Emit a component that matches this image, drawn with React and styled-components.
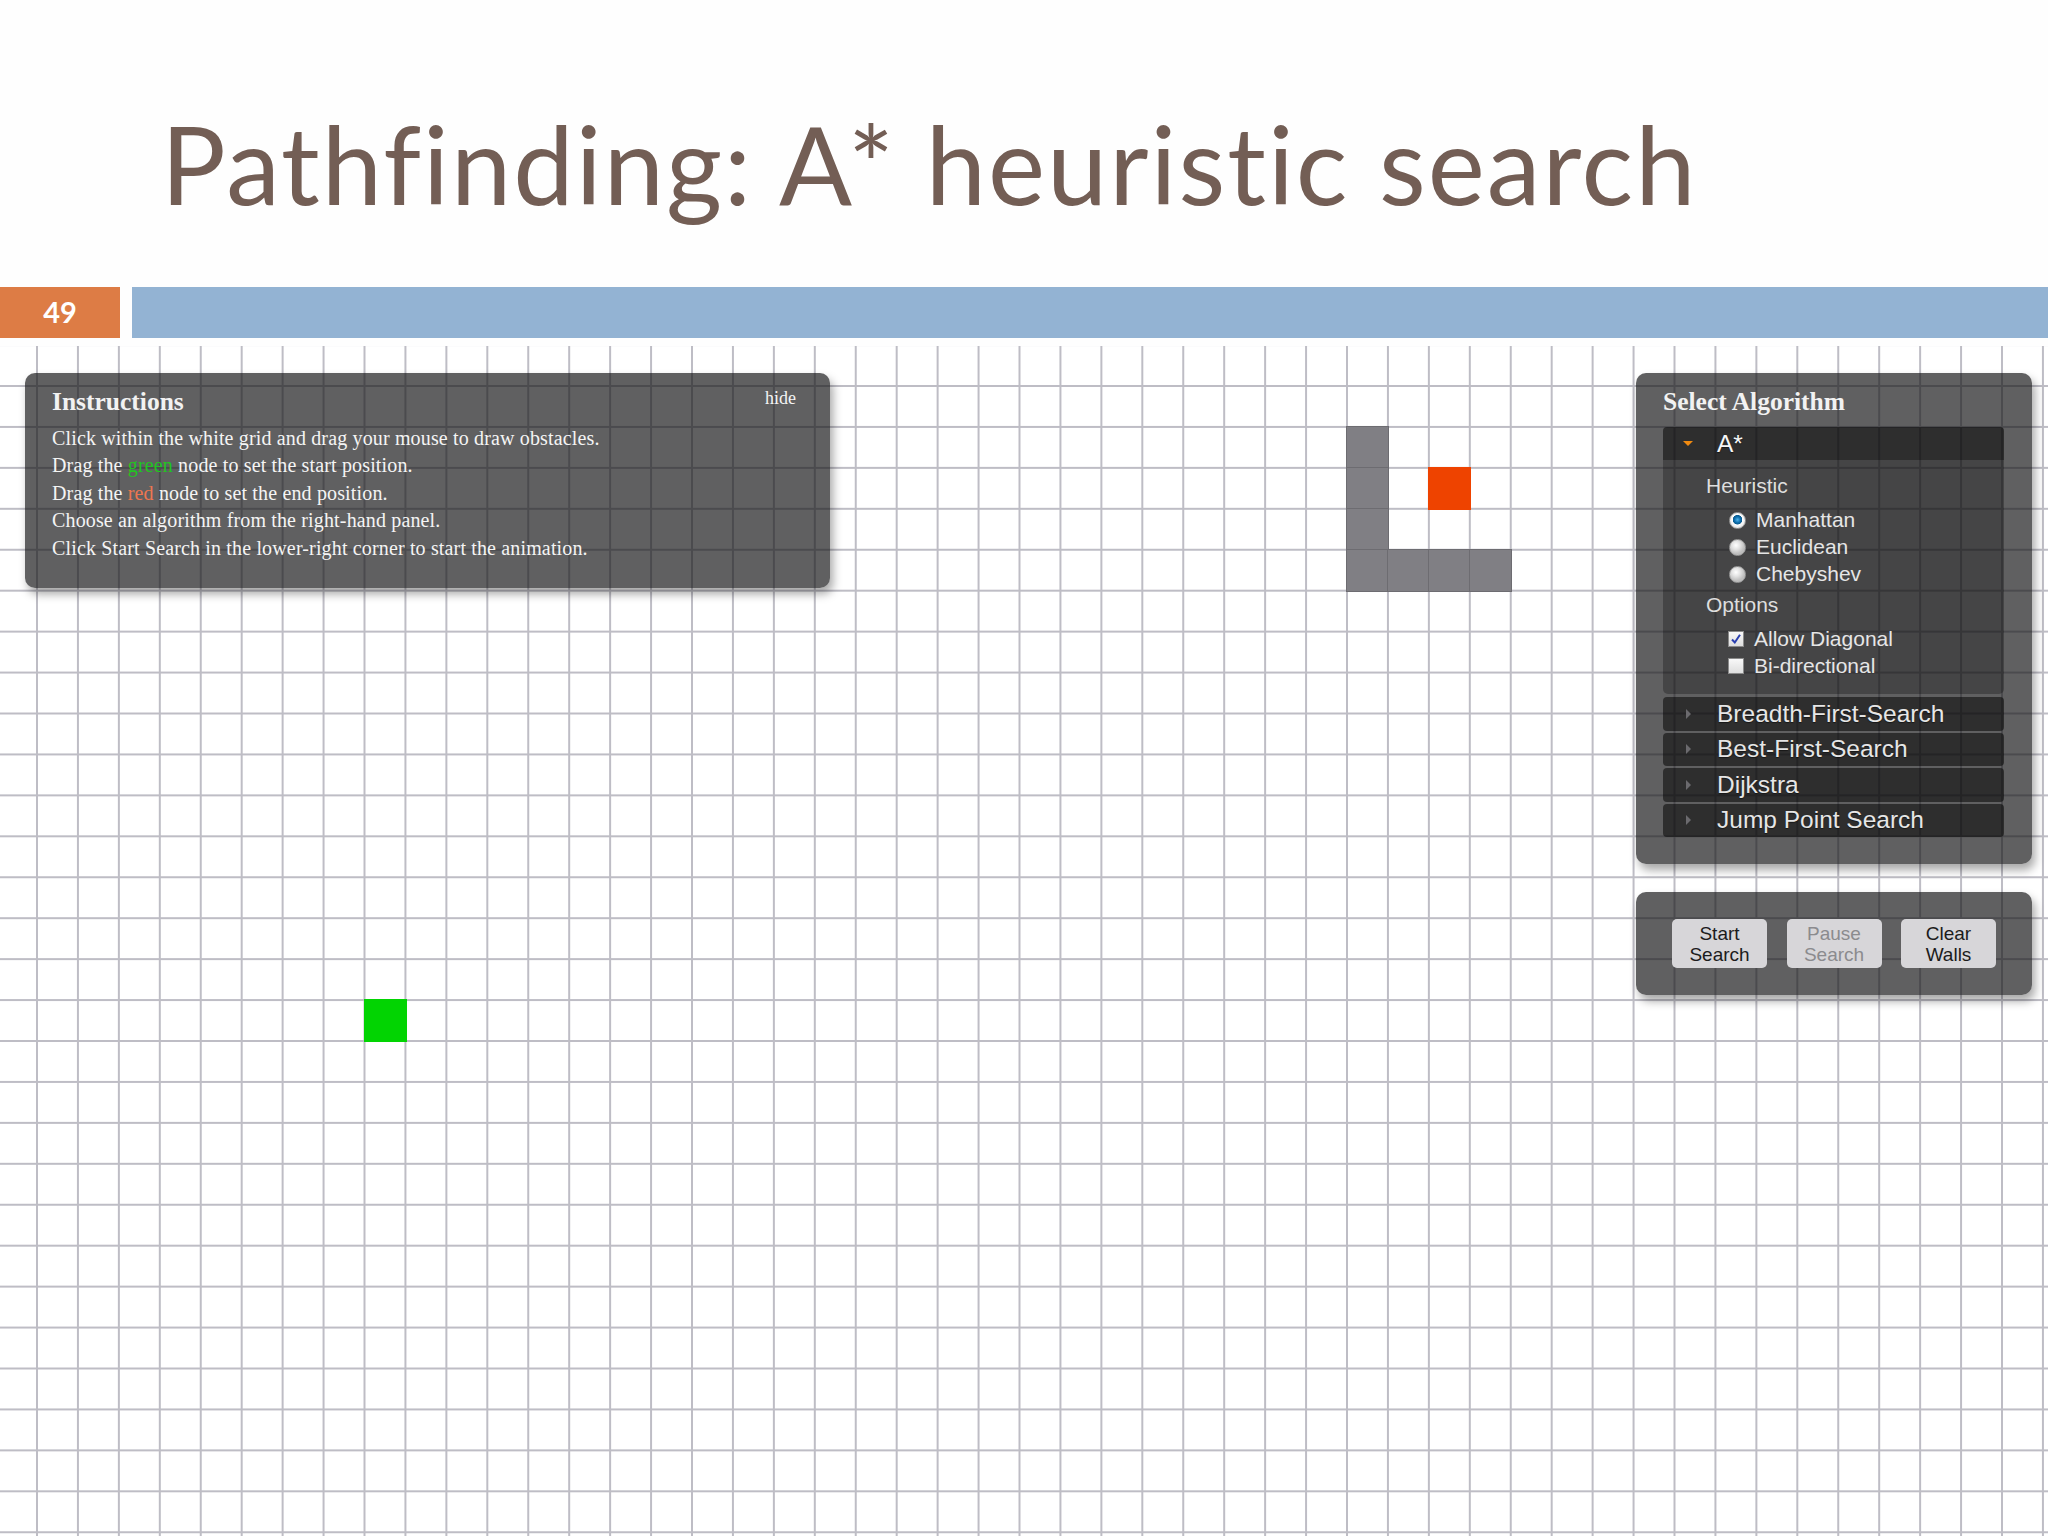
import React from "react";
import styled, { createGlobalStyle } from "styled-components";

const Global = createGlobalStyle`
  html, body { margin: 0; padding: 0; background: #ffffff; }
  body { width: 2048px; height: 1536px; overflow: hidden; }
  * { box-sizing: border-box; }
`;

const STEP = 40.95;
const GX = 37;
const GY = 40;

const Slide = styled.div`
  width: 2048px;
  height: 1536px;
  display: flex;
  flex-direction: column;
  background: #fefefe;
`;

const TitleArea = styled.header`
  height: 287px;
  padding: 109px 0 0 161px;
`;

const Title = styled.h1`
  margin: 0;
  font-family: Lato, "Open Sans", sans-serif;
  font-weight: 400;
  font-size: 108px;
  line-height: 108px;
  color: #735e55;
  letter-spacing: 2px;
  white-space: nowrap;
`;

const BarRow = styled.div`
  height: 51px;
  display: flex;
  gap: 12px;
`;

const NumberBadge = styled.div`
  width: 120px;
  background: #dd7c45;
  color: #ffffff;
  font-family: Lato, sans-serif;
  font-weight: 700;
  font-size: 29px;
  display: flex;
  align-items: center;
  justify-content: center;
  padding-bottom: 2px;
`;

const AccentBar = styled.div`
  flex: 1;
  background: #93b3d3;
`;

const Canvas = styled.main`
  margin-top: 8px;
  flex: 1;
  position: relative;
  background-color: #ffffff;
  background-image: linear-gradient(to right, #bebdc5 2px, transparent 2px),
    linear-gradient(to bottom, #bebdc5 2px, transparent 2px);
  background-size: ${STEP}px ${STEP}px;
  background-position: ${GX - 1}px ${GY - 1}px;
`;

const Cell = styled.div`
  position: absolute;
  width: ${STEP + 2}px;
  height: ${STEP + 2}px;
  background: ${(p) => p.$color};
  box-shadow: ${(p) => (p.$wall ? "inset 0 0 0 1px #6d6c71" : "none")};
`;

const Panel = styled.section`
  position: absolute;
  background: rgba(20, 20, 22, 0.68);
  border-radius: 10px;
  box-shadow: 3px 6px 10px rgba(0, 0, 0, 0.35);
`;

const InstructionsPanel = styled(Panel)`
  left: 25px;
  top: 27px;
  width: 805px;
  height: 215px;
  padding: 14px 34px 0 27px;
  font-family: "Liberation Serif", "Times New Roman", serif;
  color: #f4f4f4;
`;

const PanelHead = styled.div`
  display: flex;
  justify-content: space-between;
  align-items: flex-start;
`;

const PanelTitle = styled.h2`
  margin: 0;
  font-family: "Liberation Serif", "Times New Roman", serif;
  font-weight: 700;
  font-size: 25.5px;
  line-height: 30px;
  color: #f2f2f2;
`;

const HideLink = styled.span`
  margin-top: 1px;
  font-size: 18px;
  line-height: 20px;
  color: #f4f4f4;
`;

const InstructionList = styled.div`
  margin-top: 7.5px;
  font-size: 20px;
  line-height: 27.5px;
  letter-spacing: 0.15px;
`;

const Line = styled.div`
  white-space: nowrap;
`;

const Tint = styled.span`
  color: ${(p) => p.$color};
`;

const AlgoPanel = styled(Panel)`
  left: 1636px;
  top: 27px;
  width: 396px;
  padding: 14px 28px 27px 27px;
`;

const Accordion = styled.div`
  margin-top: 10px;
  display: flex;
  flex-direction: column;
  gap: 2px;
`;

const Section = styled.div`
  display: flex;
  flex-direction: column;
`;

const SectionHeader = styled.div`
  height: ${(p) => (p.$open ? "33px" : "33.5px")};
  display: flex;
  align-items: center;
  background: rgba(0, 0, 0, 0.52);
  border-radius: ${(p) => (p.$open ? "4px 4px 0 0" : "4px")};
  font-family: "Liberation Sans", Arial, sans-serif;
  font-size: 24.5px;
  color: ${(p) => (p.$open ? "#f6f6f6" : "#e6e6e6")};
  text-shadow: 0 1px 1px rgba(0, 0, 0, 0.5);
`;

const ArrowSlot = styled.span`
  width: 54px;
  padding-left: ${(p) => (p.$open ? "20px" : "23px")};
  display: flex;
  align-items: center;
`;

const Arrow = styled.span`
  width: 0;
  height: 0;
  border-style: solid;
  ${(p) =>
    p.$open
      ? "border-width: 5px 5px 0 5px; border-color: #f08a10 transparent transparent transparent;"
      : "border-width: 5px 0 5px 5px; border-color: transparent transparent transparent #6b6a6e;"}
`;

const SectionBody = styled.div`
  background: rgba(0, 0, 0, 0.28);
  border-radius: 0 0 5px 5px;
  padding: 12px 0 15px 43px;
  font-family: "Liberation Sans", Arial, sans-serif;
  margin-bottom: 1px;
`;

const GroupLabel = styled.div`
  font-size: 21px;
  line-height: 27px;
  color: #dedede;
  margin-top: ${(p) => p.$mt || 0}px;
`;

const OptionGroup = styled.div`
  margin-top: 7px;
  padding-left: ${(p) => p.$indent}px;
`;

const OptionRow = styled.div`
  height: 27px;
  display: flex;
  align-items: center;
  gap: ${(p) => p.$gap}px;
  font-size: 21px;
  color: #e6e6e6;
  white-space: nowrap;
`;

const Radio = styled.span`
  width: 17px;
  height: 17px;
  border-radius: 50%;
  flex: none;
  margin-top: 1px;
  border: 1px solid #9a9a9a;
  background: ${(p) =>
    p.$checked
      ? "radial-gradient(circle at 50% 45%, #4fb3ea 0, #0d6fae 3px, #0a5a8e 4.5px, #ffffff 5px, #e6e6e6 8px)"
      : "radial-gradient(circle at 40% 35%, #ffffff 0, #e4e4e4 4px, #bdbdbd 8.5px)"};
`;

const Check = styled.span`
  width: 16px;
  height: 16px;
  flex: none;
  margin-top: 1px;
  border: 1px solid #8b8b8b;
  background: linear-gradient(#f8f8f8, #dedede);
  display: flex;
  align-items: center;
  justify-content: center;
`;

const ButtonPanel = styled(Panel)`
  left: 1636px;
  top: 546px;
  width: 396px;
  height: 103px;
  display: flex;
  align-items: center;
  justify-content: center;
  gap: 19.5px;
`;

const ActionButton = styled.button`
  width: 95px;
  height: 49px;
  padding: 3.5px 0;
  border: none;
  border-radius: 5px;
  background: #d7d6d9;
  font-family: "Liberation Sans", Arial, sans-serif;
  font-size: 19px;
  line-height: 21px;
  color: ${(p) => (p.disabled ? "#8b8b8e" : "#1c1c1c")};
  text-align: center;
`;

const walls = [
  [32, 1],
  [32, 2],
  [32, 3],
  [32, 4],
  [33, 4],
  [34, 4],
  [35, 4],
];

const pos = (c, r) => ({ left: GX - 1 + STEP * c, top: GY - 1 + STEP * r });

const algorithms = ["Breadth-First-Search", "Best-First-Search", "Dijkstra", "Jump Point Search"];

export default function App() {
  return (
    <>
      <Global />
      <Slide>
        <TitleArea>
          <Title>Pathfinding: A* heuristic search</Title>
        </TitleArea>
        <BarRow>
          <NumberBadge>49</NumberBadge>
          <AccentBar />
        </BarRow>
        <Canvas>
          {walls.map(([c, r]) => (
            <Cell key={`${c}-${r}`} $wall $color="#807f84" style={pos(c, r)} />
          ))}
          <Cell $color="#ee4300" style={pos(34, 2)} />
          <Cell $color="#02d402" style={pos(8, 15)} />

          <InstructionsPanel>
            <PanelHead>
              <PanelTitle>Instructions</PanelTitle>
              <HideLink>hide</HideLink>
            </PanelHead>
            <InstructionList>
              <Line>Click within the white grid and drag your mouse to draw obstacles.</Line>
              <Line>
                Drag the <Tint $color="#22c322">green</Tint> node to set the start position.
              </Line>
              <Line>
                Drag the <Tint $color="#ee7650">red</Tint> node to set the end position.
              </Line>
              <Line>Choose an algorithm from the right-hand panel.</Line>
              <Line>Click Start Search in the lower-right corner to start the animation.</Line>
            </InstructionList>
          </InstructionsPanel>

          <AlgoPanel>
            <PanelTitle>Select Algorithm</PanelTitle>
            <Accordion>
              <Section>
                <SectionHeader $open>
                  <ArrowSlot $open>
                    <Arrow $open />
                  </ArrowSlot>
                  A*
                </SectionHeader>
                <SectionBody>
                  <GroupLabel>Heuristic</GroupLabel>
                  <OptionGroup $indent={23}>
                    <OptionRow $gap={10}>
                      <Radio $checked />
                      Manhattan
                    </OptionRow>
                    <OptionRow $gap={10}>
                      <Radio />
                      Euclidean
                    </OptionRow>
                    <OptionRow $gap={10}>
                      <Radio />
                      Chebyshev
                    </OptionRow>
                  </OptionGroup>
                  <GroupLabel $mt={4}>Options</GroupLabel>
                  <OptionGroup $indent={22}>
                    <OptionRow $gap={10}>
                      <Check>
                        <svg width="12" height="12" viewBox="0 0 12 12">
                          <path d="M2 6.5 L4.8 9.5 L10 1.8" fill="none" stroke="#2a3fb0" strokeWidth="2" />
                        </svg>
                      </Check>
                      Allow Diagonal
                    </OptionRow>
                    <OptionRow $gap={10}>
                      <Check />
                      Bi-directional
                    </OptionRow>
                  </OptionGroup>
                </SectionBody>
              </Section>
              {algorithms.map((name) => (
                <SectionHeader key={name}>
                  <ArrowSlot>
                    <Arrow />
                  </ArrowSlot>
                  {name}
                </SectionHeader>
              ))}
            </Accordion>
          </AlgoPanel>

          <ButtonPanel>
            <ActionButton>
              Start
              <br />
              Search
            </ActionButton>
            <ActionButton disabled>
              Pause
              <br />
              Search
            </ActionButton>
            <ActionButton>
              Clear
              <br />
              Walls
            </ActionButton>
          </ButtonPanel>
        </Canvas>
      </Slide>
    </>
  );
}
